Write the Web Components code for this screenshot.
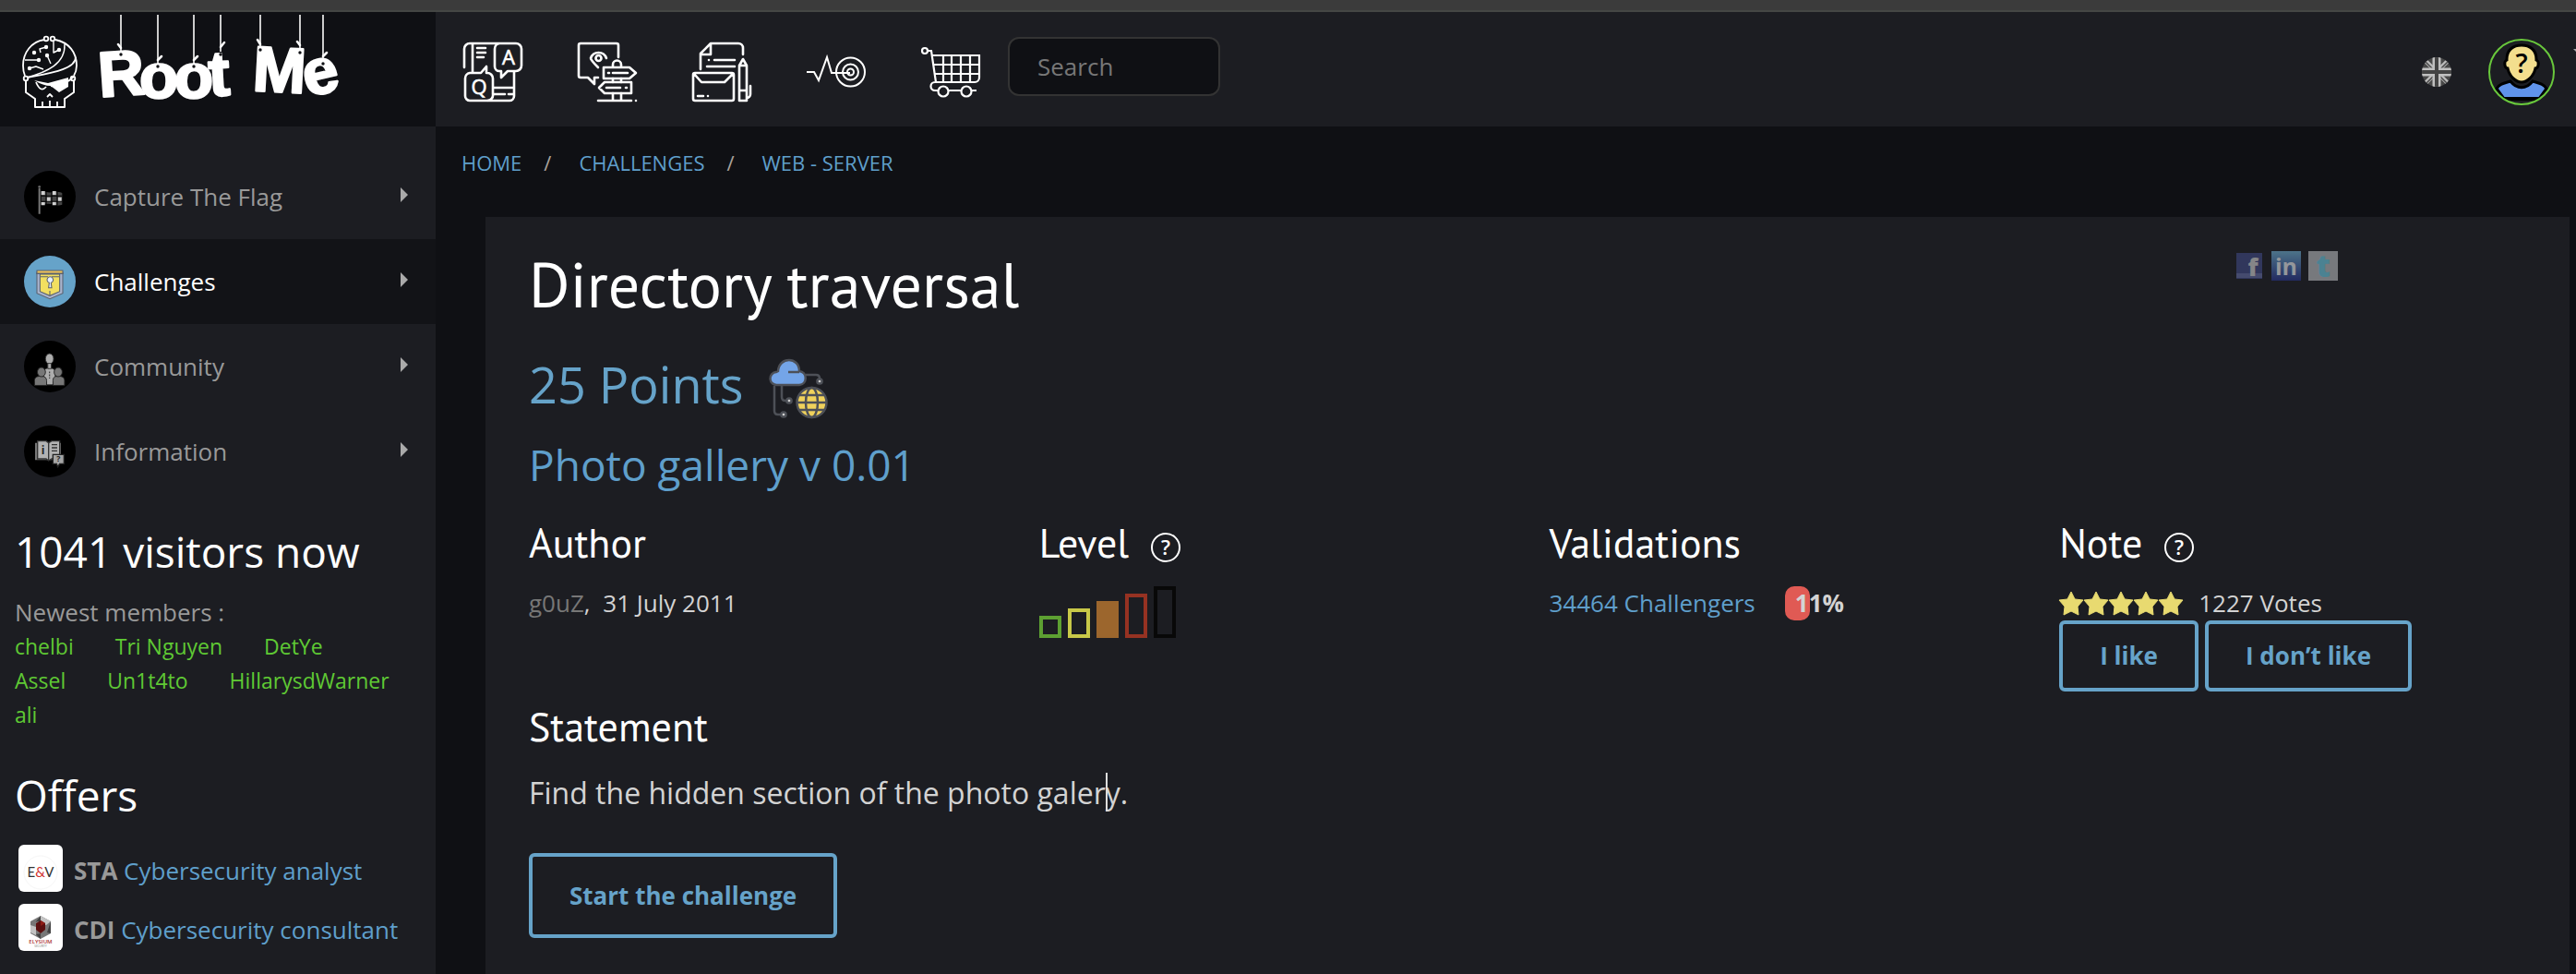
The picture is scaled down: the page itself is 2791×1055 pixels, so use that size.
<!DOCTYPE html>
<html lang="en">
<head>
<meta charset="utf-8">
<title>Directory traversal - Root Me</title>
<style>
  body {
    margin: 0;
    background: #0f1014;
    color: #d3d3d3;
    font-family: "Open Sans", sans-serif;
    font-size: 26px;
    line-height: 37px;
  }
</style>
</head>
<body>
<rm-page>
  <rm-logo slot="logo"></rm-logo>
  <rm-topbar slot="topbar"></rm-topbar>

  <rm-nav slot="sidebar">
    <rm-nav-item icon="flag">Capture The Flag</rm-nav-item>
    <rm-nav-item icon="shield" active>Challenges</rm-nav-item>
    <rm-nav-item icon="community">Community</rm-nav-item>
    <rm-nav-item icon="book">Information</rm-nav-item>
  </rm-nav>
  <rm-visitors slot="sidebar" count="1041" members="chelbi,Tri Nguyen,DetYe,Assel,Un1t4to,HillarysdWarner,ali"></rm-visitors>
  <rm-offers slot="sidebar">
    <rm-offer icon="ev" kind="STA">Cybersecurity analyst</rm-offer>
    <rm-offer icon="elysium" kind="CDI">Cybersecurity consultant</rm-offer>
  </rm-offers>

  <rm-breadcrumb items="Home,Challenges,Web - Server"></rm-breadcrumb>
  <rm-challenge heading="Directory traversal" points="25" subtitle="Photo gallery v 0.01">
    <rm-fact slot="facts" label="Author"><rm-author name="g0uZ" date="31 July 2011"></rm-author></rm-fact>
    <rm-fact slot="facts" label="Level" help><rm-level value="3"></rm-level></rm-fact>
    <rm-fact slot="facts" label="Validations"><rm-validations count="34464" percent="11"></rm-validations></rm-fact>
    <rm-fact slot="facts" label="Note" help><rm-rating stars="5" votes="1227"></rm-rating></rm-fact>
    <rm-statement slot="statement">Find the hidden section of the photo galer<rm-caret></rm-caret>y.</rm-statement>
    <rm-button slot="action" size="large">Start the challenge</rm-button>
  </rm-challenge>
</rm-page>

<script>
const ICONS = {
  faq: `<g fill="none" stroke="#fff" stroke-width="2.6" stroke-linecap="round" stroke-linejoin="round">
      <path d="M1 27V7a6 6 0 0 1 6-6h31M10 1v31M15 6h9M15 11h9M15 16h7"/>
      <path d="M39 1h18a6 6 0 0 1 6 6v18a6 6 0 0 1-6 6H48l-7 7v-7h-2a5 5 0 0 1-5-5V7a6 6 0 0 1 5-6z"/>
      <path d="M7 33h12l6-7v7h1a6 6 0 0 1 6 6v17a6 6 0 0 1-6 7H7a5 5 0 0 1-5-5V39a6 6 0 0 1 5-6z"/>
      <path d="M55 32v26a5 5 0 0 1-5 5H27M33 49h22M33 56h12M49 56h5"/></g>
    <g fill="#fff" stroke="#fff" stroke-width=".6" font-family="Open Sans, sans-serif" font-size="22" text-anchor="middle">
      <text x="49" y="24">A</text><text x="17" y="56">Q</text></g>`,
  guide: `<g fill="none" stroke="#fff" stroke-width="2.6" stroke-linejoin="round" stroke-linecap="round">
      <path d="M44 16V3a2 2 0 0 0-2-2H3a2 2 0 0 0-2 2v33a2 2 0 0 0 2 2h8l7 7v-7h4"/>
      <path d="M22 27c-5-5-8-8-8-10a9 9 0 0 1 17 0"/><circle cx="22.500" cy="17" r="3"/>
      <path d="M28 27h28l7 6-7 6H28zM33 33h1M38 33h16"/>
      <path d="M58 43H29l-6 6 6 6h29zM31 49h15M52 49h1"/>
      <path d="M38 26v-2a4 4 0 0 1 9 0v2M38 39v4M47 39v4M38 55v8M47 55v8M22 63h36M63 63h0"/></g>`,
  docs: `<g fill="none" stroke="#fff" stroke-width="2.6" stroke-linejoin="round" stroke-linecap="round">
      <path d="M9 29V12L20 1h30a5 5 0 0 1 5 5v7M9 13h11V2M18 19h0M24 19h22M16 26h30"/>
      <path d="M3 33h40a2 2 0 0 1 2 2v26a2 2 0 0 1-2 2H3a2 2 0 0 1-2-2V35a2 2 0 0 1 2-2zM2 34l8 9h25l9-9M6 58h6M17 58h0"/>
      <path d="M55 18l4 7v38h-8V25zM51 25h8M51 52h8M59 60a4 4 0 0 0 4-4v-9"/></g>`,
  pulse: `<g fill="none" stroke="#fff" stroke-width="2">
      <path d="M0 32h8l5 9 9-25 5 17h20"/><circle cx="47.500" cy="32" r="15.500"/>
      <circle cx="47.500" cy="32" r="8.500"/><circle cx="47.500" cy="32" r="3.500"/></g>`,
  cart: `<g fill="none" stroke="#fff" stroke-width="2.2">
      <circle cx="4" cy="9" r="3"/><path d="M7 9h4l5 34M12 14h51v24a5 5 0 0 1-5 5H15a4 4 0 0 0 0 9h45"/>
      <path d="M13 24h50M14 34h49M24 14v29M33 14v29M43 14v29M53 14v29"/>
      <g fill="#1c1d22"><circle cx="24" cy="53" r="5.500"/><circle cx="49" cy="53" r="5.500"/></g></g>`,
  uk: `<clipPath id="c"><circle cx="32" cy="32" r="32"/></clipPath><g clip-path="url(#c)">
      <path fill="#484848" d="M0 0h64v64H0z"/><path d="M0 0l64 64M64 0L0 64" stroke="#bbb" stroke-width="9"/>
      <path d="M0 2l64 64M66 0L0 66" stroke="#484848" stroke-width="3"/>
      <path d="M32 0v64M0 32h64" stroke="#c0c0c0" stroke-width="18"/><path d="M32 0v64M0 32h64" stroke="#444" stroke-width="8"/></g>`,
  avatar: `<clipPath id="a"><circle cx="36" cy="36" r="34"/></clipPath><g clip-path="url(#a)">
      <path d="M9 54c3-5 8-6 15-8 7 9 17 9 24 0 7 2 12 3 15 8l-8 11H17z" fill="#6093ea" stroke="#000" stroke-width="3"/>
      <path d="M16 65h40" stroke="#000" stroke-width="4"/>
      <path d="M20 22C20 12 27 7 36 7s16 5 16 15v1c4 2 2 9-1 9-2 9-9 15-15 15s-13-6-15-15c-3 0-5-7-1-9z" fill="#f3de8e" stroke="#000" stroke-width="3"/></g>
      <circle cx="36" cy="36" r="35" fill="none" stroke="#69c83c" stroke-width="2"/>
      <text x="36" y="37" font-size="29" font-weight="600" text-anchor="middle" fill="#000">?</text>`,
  flag: `<path d="M25 28v42" stroke="#777" stroke-width="3"/><circle cx="25" cy="26" r="2" fill="#666"/>
      <path d="M28 34c6-3 9 3 16 1s11-1 18 1v19c-8 3-12-1-18-1s-11-1-16 1z" fill="#454545"/>
      <g fill="#d0d0d0"><path d="M28 33h6v6h-6zM46 33h6v6h-6zM37 43h6v7h-6zM55 43h6v7h-6zM28 51h6v5h-6zM46 50h6v6h-6z"/></g>
      <path d="M36 33v23M45 33v23M54 33v23M28 41h34M28 50h34" stroke="#000" stroke-width="1.600"/>`,
  shield: `<g stroke="#59616f" stroke-width="1.600"><path d="M21 27h42v34l-21 9-21-9z" fill="#a9b4cd"/>
      <path d="M26 30h32v28l-16 7-16-7z" fill="#f2df60"/><path d="M21 24h42v5H21z" fill="#f0c45a"/>
      <path d="M20 29h44" stroke-width="2"/>
      <path d="M40 52l1-8a5 5 0 1 1 3 0l1 8z" fill="#e5edff"/><path d="M42 57v8M27 34h12M45 34h12"/></g>`,
  community: `<g transform="translate(2 5) scale(.94)"><g fill="#adadad" stroke="#333" stroke-width="1.500"><path d="M32 71V49c0-5 5-7 10-7s10 2 10 7v22z"/>
      <ellipse cx="42" cy="26" rx="7" ry="9"/><path d="M39 34h6v9h-6z"/></g>
      <g fill="#777" stroke="#222" stroke-width="1.500"><path d="M16 72V64c0-6 4-8 12-8 6 0 9 3 9 8v8zM48 72v-8c0-6 3-8 9-8 8 0 11 3 11 8v8z"/>
      <ellipse cx="28" cy="49" rx="7" ry="8"/><ellipse cx="57" cy="49" rx="7" ry="8"/></g>
      <path d="M42 48v12" stroke="#444" stroke-width="2" stroke-dasharray="3 2"/></g>`,
  book: `<path d="M18 28h42v28H18z" fill="#777"/><path d="M22 25h14l4 3 5-3h13v29H45l-5 3-4-3H22z" fill="#b2b2b2" stroke="#333" stroke-width="2"/>
      <path d="M40 28v29M45 31h9M45 36h9M45 41h9" stroke="#333" stroke-width="2"/>
      <path d="M47 47h18v15h-7l-3 5-2-5h-6z" fill="#a5a5a5" stroke="#222" stroke-width="2"/>
      <g font-weight="700" text-anchor="middle" fill="#222"><text x="31" y="46" font-size="18">i</text><text x="56" y="59" font-size="13">?</text></g>`,
  web: `<g fill="none" stroke="#4d5057" stroke-width="2.500">
      <path d="M6 29v27q0 4 4 4h3M14 29v12q0 4 4 4h2M40 17h11q4 0 4 4v1"/>
      <path d="M9 28a7 7 0 0 1-1-14l2-1C11-3 33-3 33 13c9 1 9 14 0 15z" fill="#74a5e8"/><path d="M21 14h12"/>
      <circle cx="46.500" cy="47" r="16" fill="#efd15c"/>
      <path d="M31 47h31M33 39h27M33 55h27"/><ellipse cx="46.500" cy="47" rx="6.500" ry="16"/></g>
      <g fill="#d0d0d0" stroke="#4d5057" stroke-width="2.500"><circle cx="55" cy="24" r="2.600"/><circle cx="22" cy="45" r="2.600"/><circle cx="16" cy="60" r="2.600"/></g>`,
  help: `<circle cx="16" cy="16" r="15" fill="none" stroke="#fff" stroke-width="2"/>
      <text x="16" y="24" font-size="22" font-weight="600" text-anchor="middle" fill="#fff">?</text>`,
  star: `<path d="M13 0l4 8 9 1-6 7 1 9-8-4-8 4 1-9-6-7 9-1z" fill="#e8da70" stroke="#e8da70" stroke-linejoin="round"/>`,
  facebook: `<path d="M2 2h28v28H2z" fill="#31375c"/><path d="M2 24h28v5H2z" fill="#454b6e"/>
      <text x="20" y="27" font-size="27" font-weight="800" text-anchor="middle" fill="#858688">f</text>`,
  linkedin: `<linearGradient id="l" x2="0" y2="1"><stop stop-color="#4d7389"/><stop offset="1" stop-color="#222a60"/></linearGradient>
      <path d="M0 0h32v32H0z" fill="url(#l)"/><text x="16" y="26" font-size="25" font-weight="700" text-anchor="middle" fill="#94979b">in</text>`,
  twitter: `<path d="M0 0h32v32H0z" fill="#77797d"/><text x="16" y="28" font-size="34" font-weight="800" text-anchor="middle" fill="#4b8292">t</text>`,
  ev: `<circle cx="24" cy="30" r="18" fill="none" stroke="#f6f6f6"/>
      <text x="24" y="35" font-size="15" text-anchor="middle" font-family="Lato, sans-serif" fill="#333">E<tspan fill="#d2332f">&amp;</tspan>V</text>`,
  elysium: `<path d="M24 13l11 6v13l-11 6-11-6V19z" fill="#777"/><path d="M24 13l11 6-5 4-12-3zM13 23l6 2v9l-6-3z" fill="#c3c3c3"/>
      <path d="M24 13l-6 7 6-1zM35 19l-4 12 4 1zM19 33l5 5v-6z" fill="#424242"/>
      <path d="M24 18l5 3v7l-5 4-5-4v-7z" fill="#5c1010"/><path d="M24 18l5 3-5 3z" fill="#8e1c16"/>
      <g text-anchor="middle"><text x="24" y="43" font-size="6" font-weight="600" fill="#a33">ELYSIUM</text><text x="24" y="47" font-size="3" fill="#777">SECURITY</text></g>`
};

const BOXES = { avatar: 72, flag: 84, shield: 84, community: 84, book: 84, help: 32, star: 26, facebook: 32, linkedin: 32, twitter: 32, ev: 48, elysium: 48 };

function icon(name, size) {
  const box = BOXES[name] || 64;
  return `<svg class="icon" width="${size}" height="${size}" viewBox="0 0 ${box} ${box}" overflow="visible" aria-hidden="true">${ICONS[name]}</svg>`;
}

// Base class: opens the shadow root and fills it from render()
class RmElement extends HTMLElement {
  constructor() {
    super();
    this.attachShadow({ mode: "open" });
  }

  connectedCallback() {
    this.shadowRoot.innerHTML = `
      <style>
        :host { display: block; }
        a { color: inherit; text-decoration: none; }
        h1, h2, h3, p, ul, ol { margin: 0; padding: 0; list-style: none; font-weight: 400; }
        svg { display: block; flex: none; }
      </style>
      ${this.render()}`;
  }
}

class RmPage extends RmElement {
  render() {
    return `
      <style>
        :host { display: flex; flex-direction: column; min-height: 100vh; }
        .strip { height: 11px; background: #3b3b3b; border-bottom: 2px solid #444644; }
        .grid {
          flex: 1;
          display: grid;
          grid-template-columns: 472px 1fr;
          grid-template-rows: 124px 1fr;
        }
        .top, aside { background: #1c1d22; }
        main { display: flex; flex-direction: column; min-width: 0; }
      </style>
      <div class="strip"></div>
      <div class="grid">
        <div><slot name="logo"></slot></div>
        <header class="top"><slot name="topbar"></slot></header>
        <aside><slot name="sidebar"></slot></aside>
        <main><slot></slot></main>
      </div>`;
  }
}

class RmLogo extends RmElement {
  render() {
    return `
      <a href="#" aria-label="Root Me">
        <svg width="400" height="124" viewBox="0 13 400 124">
          <g fill="none" stroke="#fff" stroke-width="1.800" stroke-linejoin="round">
            <path d="M48 43C34 45 25 57 25 71q0 6 2 11M60 43c15 3 23 14 23 28q0 6-3 11"/>
            <path d="M28 87v13l10 7v9h32v-9l10-7V87" stroke-width="2"/>
            <path d="M46 116v-6M54 116v-7M62 116v-6M51 105l3-3 3 3"/>
            <path d="M29 84c22-6 42-15 41-36M58 45v12l6-3M44 57l-1-4 7-2M27 65h14M51 60l4 9M32 74l7-2 8 3" stroke-width="1.400"/>
            <path d="M30 84c25-5 52-9 52-22M80 83q-13 12-25 10M39 89q5 12 11 5"/>
            <circle cx="50" cy="42" r="2.300"/><circle cx="57" cy="42" r="2.300"/>
            <circle cx="28" cy="85" r="2.300"/><circle cx="79" cy="85" r="2.300"/>
          </g>
          <g fill="#fff">
            <circle cx="37" cy="57" r="2.200"/><circle cx="50" cy="51" r="2.200"/><circle cx="64" cy="54" r="2.200"/>
            <circle cx="42" cy="65" r="2.200"/><circle cx="51" cy="60" r="2.200"/><circle cx="32" cy="74" r="2.200"/>
            <path d="M37 87l15 3 22-6v10l-10 6-9-7q-8 0-18-6z"/>
          </g>
          <path d="M131 16v40M171 16v55M210 16v55M239 16v40M282 16v36M325 16v38M350 16v52" stroke="#ccc" stroke-width="2"/>
          <path d="M131 52l-3-4M171 65l4-4M210 65l4-4M239 51l4-5M282 48l-3-5M325 49l-3-4M350 61l4-4" stroke="#fff" stroke-width="2.500" stroke-linecap="round"/>
          <text x="108 151 189 227 260 273 333" y="105 106 106 104 104 98 105" rotate="-4 0 0 -3 0 3 -13"
            font-family="Liberation Sans, Arial, sans-serif" font-weight="700" font-size="69"
            fill="#fff" stroke="#fff" stroke-width="2.500" stroke-linejoin="round">Root Me</text>
          <g fill="#0f1014"><circle cx="131" cy="59" r="1.700"/><circle cx="171" cy="72" r="1.700"/><circle cx="210" cy="72" r="1.700"/>
            <circle cx="239" cy="59" r="1.700"/><circle cx="282" cy="54" r="1.700"/><circle cx="325" cy="57" r="1.700"/><circle cx="350" cy="69" r="1.700"/></g>
        </svg>
      </a>`;
  }
}

class RmTopbar extends RmElement {
  render() {
    const links = { faq: "Help", guide: "Guide", docs: "Documentation", pulse: "Activity", cart: "Shop" };
    return `
      <style>
        :host { display: flex; align-items: center; height: 124px; padding-left: 30px; overflow: hidden; }
        nav { display: flex; gap: 60px; padding-top: 6px; }
        input {
          width: 230px;
          height: 64px;
          box-sizing: border-box;
          margin: 0 0 6px 30px;
          padding: 0 30px;
          border: 2px solid #333;
          border-radius: 12px;
          background: #0f1014;
          color: #d3d3d3;
          font: inherit;
        }
        input::placeholder { color: #777; opacity: 1; }
        .user { display: flex; align-items: center; gap: 40px; margin-left: auto; padding-top: 6px; }
        .more { width: 3px; margin-left: -20px; overflow: hidden; align-self: start; }
      </style>
      <nav aria-label="Tools">
        ${Object.keys(links).map(key => `<a href="#" aria-label="${links[key]}">${icon(key, 64)}</a>`).join("")}
      </nav>
      <input type="search" placeholder="Search" aria-label="Search">
      <div class="user">
        <a href="#" aria-label="English">${icon("uk", 32)}</a>
        <a href="#" aria-label="Profile">${icon("avatar", 72)}</a>
        <div class="more"><svg width="14" height="30" viewBox="0 0 14 30"><path d="M0 11h14l-7 7z" fill="#aaa"/></svg></div>
      </div>`;
  }
}

class RmNav extends RmElement {
  render() {
    return `<style>:host { padding-top: 30px; }</style><nav aria-label="Main"><slot></slot></nav>`;
  }
}

class RmNavItem extends RmElement {
  render() {
    return `
      <style>
        a {
          display: flex;
          align-items: center;
          gap: 20px;
          height: 92px;
          padding: 0 30px 0 26px;
          color: #999;
        }
        .badge { border-radius: 50%; background: #000; overflow: hidden; }
        .arrow { margin: 0 0 4px auto; }
        :host([active]) a { background: #121317; color: #fff; }
        :host([active]) .badge { background: #66a3c9; }
      </style>
      <a href="#">
        <span class="badge">${icon(this.getAttribute("icon"), 56)}</span>
        <span><slot></slot></span>
        <svg class="arrow" width="8" height="16" viewBox="0 0 8 16"><path d="M0 0l8 8-8 8z" fill="#aaa"/></svg>
      </a>`;
  }
}

class RmVisitors extends RmElement {
  render() {
    const members = this.getAttribute("members").split(",");
    return `
      <style>
        :host { padding: 31px 36px 0 16px; }
        h2 { margin-bottom: 17px; color: #fff; font-size: 46px; line-height: 62px; }
        p { color: #999; }
        ul { display: flex; flex-wrap: wrap; column-gap: 45px; color: #5fc934; font-size: 23px; }
      </style>
      <h2>${this.getAttribute("count")} visitors now</h2>
      <p>Newest members :</p>
      <ul>${members.map(name => `<li><a href="#">${name}</a></li>`).join("")}</ul>`;
  }
}

class RmOffers extends RmElement {
  render() {
    return `
      <style>
        :host { padding: 37px 16px 24px; }
        h2 { margin-bottom: 23px; color: #fff; font-size: 46px; line-height: 62px; }
        .list { display: flex; flex-direction: column; gap: 13px; padding-left: 4px; }
      </style>
      <h2>Offers</h2>
      <div class="list"><slot></slot></div>`;
  }
}

class RmOffer extends RmElement {
  render() {
    return `
      <style>
        :host { display: flex; align-items: end; gap: 12px; line-height: 46px; }
        .tile { height: 51px; border-radius: 6px; background: #fff; }
        b { color: #999; }
        a { color: #5f9fcb; }
      </style>
      <span class="tile">${icon(this.getAttribute("icon"), 48)}</span>
      <span><b>${this.getAttribute("kind")}</b> <a href="#"><slot></slot></a></span>`;
  }
}

class RmBreadcrumb extends RmElement {
  render() {
    const items = this.getAttribute("items").split(",");
    return `
      <style>
        :host { padding: 19px 28px 39px; font-size: 22px; line-height: 40px; }
        ol { display: flex; text-transform: uppercase; color: #5f9fcb; }
        li + li::before { content: "/"; margin: 0 30px 0 24px; color: #a9a29b; }
      </style>
      <nav aria-label="Breadcrumb">
        <ol>${items.map(item => `<li><a href="#">${item}</a></li>`).join("")}</ol>
      </nav>`;
  }
}

class RmChallenge extends RmElement {
  render() {
    return `
      <style>
        :host { flex: 1; margin: 0 7px 0 54px; padding: 33px 0 36px 47px; background: #1c1d22; }
        .head { display: flex; justify-content: space-between; align-items: start; }
        h1 { color: #fff; font-family: "PT Sans", Lato, sans-serif; font-size: 68px; line-height: 80px; }
        .share { display: flex; gap: 8px; margin: 4px 251px 0 0; }
        .points { display: flex; align-items: end; gap: 28px; margin-top: 31px; color: #66a3c9; font-size: 54px; line-height: 74px; }
        .subtitle { margin-top: 19px; color: #5f9fcb; font-size: 46px; line-height: 62px; }
        .facts { display: grid; grid-template-columns: repeat(auto-fit, minmax(400px, 1fr)); margin-top: 25px; }
      </style>
      <div class="head">
        <h1>${this.getAttribute("heading")}</h1>
        <div class="share">
          <a href="#" aria-label="Facebook">${icon("facebook", 32)}</a>
          <a href="#" aria-label="LinkedIn">${icon("linkedin", 32)}</a>
          <a href="#" aria-label="Twitter">${icon("twitter", 32)}</a>
        </div>
      </div>
      <h2 class="points">${this.getAttribute("points")} Points <a href="#" aria-label="Web - Server">${icon("web", 64)}</a></h2>
      <h2 class="subtitle">${this.getAttribute("subtitle")}</h2>
      <div class="facts"><slot name="facts"></slot></div>
      <slot name="statement"></slot>
      <slot name="action"></slot>`;
  }
}

class RmFact extends RmElement {
  render() {
    return `
      <style>
        h3 {
          display: flex;
          align-items: center;
          gap: 24px;
          margin-bottom: 18px;
          color: #fff;
          font-family: "PT Sans", Lato, sans-serif;
          font-size: 44px;
          line-height: 58px;
        }
        .icon { margin-top: 10px; font-family: "Open Sans", sans-serif; }
      </style>
      <h3>${this.getAttribute("label")}${this.hasAttribute("help") ? `<a href="#" aria-label="Help">${icon("help", 32)}</a>` : ""}</h3>
      <slot></slot>`;
  }
}

class RmAuthor extends RmElement {
  render() {
    return `
      <style>a { color: #777; } time { margin-left: 7px; }</style>
      <a href="#">${this.getAttribute("name")}</a>, <time>${this.getAttribute("date")}</time>`;
  }
}

class RmLevel extends RmElement {
  render() {
    const value = Number(this.getAttribute("value"));
    const colors = ["#5da032", "#c8c848", "#9c662d", "#963222", "#080808"];
    return `
      <style>
        :host { display: flex; align-items: end; gap: 7px; height: 56px; }
        i { width: 24px; box-sizing: border-box; border: 4px solid; }
      </style>
      ${colors.map((color, n) => `<i style="height: ${24 + n * 8}px; border-color: ${color};${n + 1 === value ? ` background: ${color}` : ""}"></i>`).join("")}`;
  }
}

class RmValidations extends RmElement {
  render() {
    const percent = this.getAttribute("percent");
    return `
      <style>
        :host { display: flex; gap: 32px; }
        a { color: #5f9fcb; }
        .gauge { width: 250px; }
        .bar { width: ${percent}%; border-radius: 10px; background: #e05a54; white-space: nowrap; text-indent: 11px; }
      </style>
      <a href="#">${this.getAttribute("count")} Challengers</a>
      <div class="gauge"><div class="bar"><b>${percent}%</b></div></div>`;
  }
}

class RmRating extends RmElement {
  render() {
    const stars = Number(this.getAttribute("stars"));
    return `
      <style>
        .line { display: flex; align-items: center; }
        .stars { display: flex; gap: 1px; margin-right: 17px; }
        .buttons { display: flex; gap: 7px; }
      </style>
      <div class="line">
        <span class="stars">${icon("star", 26).repeat(stars)}</span>${this.getAttribute("votes")} Votes
      </div>
      <div class="buttons"><rm-button>I like</rm-button><rm-button>I don’t like</rm-button></div>`;
  }
}

class RmStatement extends RmElement {
  render() {
    return `
      <style>
        :host { margin: 9px 0 42px; }
        h3 { color: #fff; font-family: "PT Sans", Lato, sans-serif; font-size: 44px; line-height: 58px; }
        p { margin-top: 20px; font-size: 32px; line-height: 46px; }
      </style>
      <h3>Statement</h3>
      <p><slot></slot></p>`;
  }
}

// Text cursor standing between two letters, takes no room in the line
class RmCaret extends RmElement {
  render() {
    return `
      <style>
        :host { display: inline-block; position: relative; width: 0; }
        i { position: absolute; left: 0; bottom: -8px; width: 2px; height: 42px; background: #ddd; }
      </style>
      <i></i>`;
  }
}

class RmButton extends RmElement {
  render() {
    return `
      <style>
        :host { display: inline-block; }
        button {
          display: block;
          height: 77px;
          padding: 0 40px;
          border: 4px solid #66a3c9;
          border-radius: 6px;
          background: none;
          color: #66a3c9;
          font: inherit;
          font-weight: 700;
          cursor: pointer;
        }
        :host([size="large"]) button { height: 92px; }
      </style>
      <button type="button"><slot></slot></button>`;
  }
}

customElements.define("rm-page", RmPage);
customElements.define("rm-logo", RmLogo);
customElements.define("rm-topbar", RmTopbar);
customElements.define("rm-nav", RmNav);
customElements.define("rm-nav-item", RmNavItem);
customElements.define("rm-visitors", RmVisitors);
customElements.define("rm-offers", RmOffers);
customElements.define("rm-offer", RmOffer);
customElements.define("rm-breadcrumb", RmBreadcrumb);
customElements.define("rm-challenge", RmChallenge);
customElements.define("rm-fact", RmFact);
customElements.define("rm-author", RmAuthor);
customElements.define("rm-level", RmLevel);
customElements.define("rm-validations", RmValidations);
customElements.define("rm-rating", RmRating);
customElements.define("rm-statement", RmStatement);
customElements.define("rm-caret", RmCaret);
customElements.define("rm-button", RmButton);
</script>
</body>
</html>
